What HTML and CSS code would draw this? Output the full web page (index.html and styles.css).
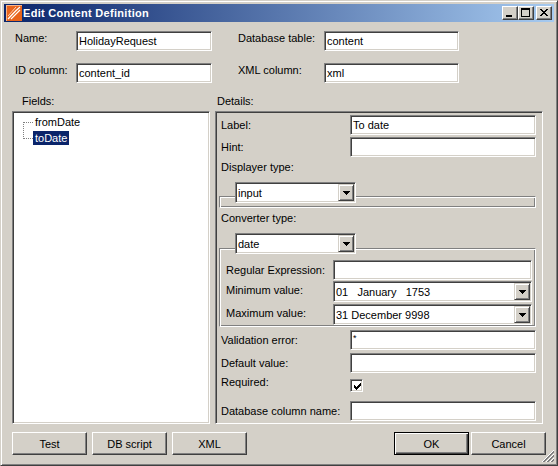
FILE: index.html
```html
<!DOCTYPE html>
<html>
	<head>
		<meta charset="UTF-8">
		<title>Edit Content Definition</title>
		<link rel="stylesheet" href="styles.css">
	</head>
	<body>
		<div class="window">
			<!-- Title bar -->
			<div class="titlebar">
				<svg class="app-icon" width="16" height="16" viewBox="0 0 16 16">
					<rect x="0" y="0" width="16" height="16" fill="#e8641c"/>
					<path d="M0 0.5H16M0.5 0V16" stroke="#f8b58a" stroke-width="1"/>
					<path d="M2 14 C6 10 9 6 14 2" stroke="#ffffff" stroke-width="1.3" fill="none"/>
					<path d="M5 14 C8 11 11 8 14 5" stroke="#ffffff" stroke-width="1.1" fill="none"/>
					<path d="M2 11 C5 8 7 5 10 2" stroke="#fcd2b4" stroke-width="1" fill="none"/>
				</svg>
				<span class="title">Edit Content Definition</span>
				<div class="caption-buttons">
					<div class="cap-btn">
						<svg width="14" height="12"><rect x="3" y="8" width="6" height="2"/></svg>
					</div>
					<div class="cap-btn">
						<svg width="14" height="12"><path d="M2 1h9v2h-9z M2 3h1v7h-1z M10 3h1v7h-1z M2 9h9v1h-9z"/></svg>
					</div>
					<div class="cap-btn close">
						<svg width="14" height="12"><path transform="translate(3,2)" d="M0 0h2v1h-2z M6 0h2v1h-2z M1 1h2v1h-2z M5 1h2v1h-2z M2 2h4v1h-4z M3 3h2v1h-2z M2 4h4v1h-4z M1 5h2v1h-2z M5 5h2v1h-2z M0 6h2v1h-2z M6 6h2v1h-2z"/></svg>
					</div>
				</div>
			</div>

			<!-- Content info -->
			<div class="header-form">
				<div class="hlabel">Name:</div>
				<div class="field">HolidayRequest</div>
				<div class="hlabel spaced">Database table:</div>
				<div class="field">content</div>
				<div class="hlabel">ID column:</div>
				<div class="field">content_id</div>
				<div class="hlabel spaced">XML column:</div>
				<div class="field">xml</div>
			</div>

			<div class="split">
				<div class="fields-col">
					<div class="col-label">Fields:</div>
					<div class="tree">
						<div class="node first"><span>fromDate</span></div>
						<div class="node last selected"><span>toDate</span></div>
					</div>
				</div>
				<div class="details-col">
					<div class="col-label">Details:</div>
					<div class="details">
						<div class="row">
							<div class="dlabel">Label:</div>
							<div class="field wide">To date</div>
						</div>
						<div class="row">
							<div class="dlabel">Hint:</div>
							<div class="field wide"></div>
						</div>
						<div class="row caption">Displayer type:</div>
						<div class="combo picker">
							<span class="combo-text">input</span>
							<span class="combo-btn"><svg width="7" height="4"><path d="M0 0h7v1h-7z M1 1h5v1h-5z M2 2h3v1h-3z M3 3h1v1h-1z"/></svg></span>
						</div>
						<div class="group empty"></div>
						<div class="row caption after-group">Converter type:</div>
						<div class="combo picker">
							<span class="combo-text">date</span>
							<span class="combo-btn"><svg width="7" height="4"><path d="M0 0h7v1h-7z M1 1h5v1h-5z M2 2h3v1h-3z M3 3h1v1h-1z"/></svg></span>
						</div>
						<div class="group converter">
							<div class="grow">
								<div class="glabel">Regular Expression:</div>
								<div class="field gfield"></div>
							</div>
							<div class="grow tall">
								<div class="glabel up">Minimum value:</div>
								<div class="combo gfield">
									<span class="combo-text">01   January   1753</span>
									<span class="combo-btn"><svg width="7" height="4"><path d="M0 0h7v1h-7z M1 1h5v1h-5z M2 2h3v1h-3z M3 3h1v1h-1z"/></svg></span>
								</div>
							</div>
							<div class="grow tall second">
								<div class="glabel up">Maximum value:</div>
								<div class="combo gfield">
									<span class="combo-text">31 December 9998</span>
									<span class="combo-btn"><svg width="7" height="4"><path d="M0 0h7v1h-7z M1 1h5v1h-5z M2 2h3v1h-3z M3 3h1v1h-1z"/></svg></span>
								</div>
							</div>
						</div>
						<div class="row loose">
							<div class="dlabel">Validation error:</div>
							<div class="field wide star"><span>*</span></div>
						</div>
						<div class="row loose">
							<div class="dlabel">Default value:</div>
							<div class="field wide"></div>
						</div>
						<div class="row loose required">
							<div class="dlabel">Required:</div>
							<div class="checkbox">
								<svg width="7" height="7"><path d="M6 0h1v1h-1z M5 1h2v1h-2z M0 2h1v1h-1z M4 2h3v1h-3z M0 3h2v1h-2z M3 3h3v1h-3z M0 4h5v1h-5z M1 5h3v1h-3z M2 6h1v1h-1z"/></svg>
							</div>
						</div>
						<div class="row last-row">
							<div class="dlabel">Database column name:</div>
							<div class="field wide"></div>
						</div>
					</div>
				</div>
			</div>

			<!-- Buttons -->
			<div class="actions">
				<div class="btn-group">
					<div class="btn">Test</div>
					<div class="btn">DB script</div>
					<div class="btn">XML</div>
				</div>
				<div class="btn-group right">
					<div class="btn default">OK</div>
					<div class="btn">Cancel</div>
				</div>
			</div>

			<svg class="grip" width="12" height="12" viewBox="0 0 12 12">
				<g stroke-width="1" shape-rendering="crispEdges">
					<path d="M0 12 L12 0" stroke="#ffffff"/>
					<path d="M1 12 L12 1 M2 12 L12 2" stroke="#808080"/>
					<path d="M4 12 L12 4" stroke="#ffffff"/>
					<path d="M5 12 L12 5 M6 12 L12 6" stroke="#808080"/>
					<path d="M8 12 L12 8" stroke="#ffffff"/>
					<path d="M9 12 L12 9 M10 12 L12 10" stroke="#808080"/>
				</g>
			</svg>
		</div>
	</body>
</html>
```

FILE: styles.css
```css
body {
	margin: 0;
	font-family: "Liberation Sans", Arial, sans-serif;
	font-size: 11px;
	color: #000000;
	background-color: #d4d0c8;
} .window {
	position: relative;
	width: 558px;
	height: 466px;
	box-sizing: border-box;
	padding: 3px;
	border: 1px solid;
	border-color: #d4d0c8 #404040 #404040 #d4d0c8;
	box-shadow: inset 1px 1px #ffffff, inset -1px -1px #808080;
	background-color: #d4d0c8;
}

/* title bar */
.titlebar {
	display: flex;
	align-items: center;
	height: 18px;
	padding: 0 2px;
	background: linear-gradient(to right, #0a246a, #a6caf0);
} .app-icon {
	display: block;
} .title {
	margin-left: 1px;
	color: #ffffff;
	font-weight: bold;
	letter-spacing: 0.3px;
	white-space: nowrap;
} .caption-buttons {
	display: flex;
	margin-left: auto;
} .cap-btn {
	width: 16px;
	height: 14px;
	box-sizing: border-box;
	border: 1px solid;
	border-color: #ffffff #404040 #404040 #ffffff;
	box-shadow: inset -1px -1px #808080;
	background-color: #d4d0c8;
} .cap-btn svg {
	display: block;
} .cap-btn.close {
	margin-left: 2px;
}

/* edit boxes */
.field {
	display: flex;
	align-items: center;
	height: 20px;
	box-sizing: border-box;
	padding: 0 2px;
	border: 1px solid;
	border-color: #808080 #ffffff #ffffff #808080;
	box-shadow: inset 1px 1px #404040, inset -1px -1px #d4d0c8;
	background-color: #ffffff;
	white-space: pre;
	overflow: hidden;
} .field.star {
	align-items: flex-start;
	font-size: 9px;
	padding-top: 2px;
}

.header-form {
	display: grid;
	grid-template-columns: 61px 136px 112px 135px;
	grid-auto-rows: 20px;
	row-gap: 12px;
	padding: 9px 0 0 11px;
} .hlabel {
	line-height: 13px;
	padding-top: 1px;
} .hlabel.spaced {
	padding-left: 26px;
}

.split {
	display: flex;
	gap: 5px;
	margin-top: 12px;
	padding-left: 8px;
} .fields-col, .details-col {
	display: flex;
	flex-direction: column;
} .fields-col {
	width: 198px;
} .details-col {
	width: 328px;
} .col-label {
	height: 13px;
	line-height: 13px;
	margin-bottom: 3px;
} .fields-col .col-label {
	padding-left: 10px;
} .details-col .col-label {
	padding-left: 2px;
}

/* tree */
.tree {
	flex: 1;
	box-sizing: border-box;
	padding: 2px 0 0 1px;
	border: 1px solid;
	border-color: #808080 #ffffff #ffffff #808080;
	box-shadow: inset 1px 1px #404040, inset -1px -1px #d4d0c8;
	background-color: #ffffff;
} .node {
	position: relative;
	display: flex;
	align-items: center;
	height: 16px;
	padding-left: 19px;
} .node span {
	padding: 0 2px;
	line-height: 14px;
} .node.selected span {
	background-color: #0a246a;
	color: #ffffff;
} .node::before {
	content: "";
	position: absolute;
	left: 9px;
	width: 9px;
	height: 8px;
	border-left: 1px dotted #808080;
} .node.first::before {
	top: 8px;
	border-top: 1px dotted #808080;
} .node.last::before {
	top: 0;
	border-bottom: 1px dotted #808080;
}

/* details */
.details {
	display: flex;
	flex-direction: column;
	box-sizing: border-box;
	padding: 1px 6px 2px 3px;
	border: 1px solid;
	border-color: #808080 #ffffff #ffffff #808080;
	box-shadow: inset 1px 1px #404040, inset -1px -1px #d4d0c8;
} .row {
	display: flex;
	align-items: center;
	height: 20px;
	margin-top: 2px;
	padding-left: 2px;
} .row.caption {
	height: 16px;
} .row.after-group {
	height: 17px;
	margin-top: 1px;
} .row.loose {
	margin-top: 3px;
} .row.last-row {
	margin-top: 5px;
} .row.required {
	align-items: flex-start;
} .row.required .dlabel {
	line-height: 13px;
} .dlabel {
	width: 129px;
	flex-shrink: 0;
	white-space: nowrap;
} .field.wide {
	width: 186px;
}

.checkbox {
	width: 13px;
	height: 13px;
	box-sizing: border-box;
	margin-top: 3px;
	padding: 2px 0 0 2px;
	border: 1px solid;
	border-color: #808080 #ffffff #ffffff #808080;
	box-shadow: inset 1px 1px #404040, inset -1px -1px #d4d0c8;
	background-color: #ffffff;
} .checkbox svg {
	display: block;
	margin: 1px 0 0 1px;
}

/* combo boxes */
.combo {
	position: relative;
	display: flex;
	height: 21px;
	box-sizing: border-box;
	padding: 1px;
	border: 1px solid;
	border-color: #808080 #ffffff #ffffff #808080;
	box-shadow: inset 1px 1px #404040, inset -1px -1px #d4d0c8;
	background-color: #ffffff;
} .combo.picker {
	align-self: flex-start;
	width: 121px;
	margin: 7px 0 0 16px;
} .combo-text {
	flex: 1;
	display: flex;
	align-items: center;
	padding-left: 1px;
	white-space: pre;
} .combo-btn {
	display: flex;
	align-items: center;
	justify-content: center;
	width: 16px;
	box-sizing: border-box;
	border: 1px solid;
	border-color: #d4d0c8 #404040 #404040 #d4d0c8;
	box-shadow: inset 1px 1px #ffffff, inset -1px -1px #808080;
	background-color: #d4d0c8;
} .combo-btn svg {
	display: block;
}

/* group frames under the combos */
.group {
	box-sizing: border-box;
	border: 1px solid;
	border-color: #808080 #ffffff #ffffff #808080;
	box-shadow: inset 1px 1px #ffffff, inset -1px -1px #808080;
} .group.empty {
	height: 12px;
	margin-top: -7px;
} .group.converter {
	height: 79px;
	margin-top: -6px;
	padding: 11px 3px 1px 6px;
} .grow {
	display: flex;
	align-items: center;
	height: 20px;
} .grow.tall {
	height: 21px;
	margin-top: 1px;
} .grow.second {
	margin-top: 2px;
} .glabel {
	width: 107px;
	flex-shrink: 0;
	white-space: nowrap;
} .glabel.up {
	padding-bottom: 3px;
} .gfield {
	width: 199px;
}

/* bottom buttons */
.actions {
	display: flex;
	justify-content: space-between;
	margin-top: 8px;
	padding: 0 8px;
} .btn-group {
	display: flex;
	gap: 5px;
} .btn-group.right {
	gap: 2px;
} .btn {
	display: flex;
	align-items: center;
	justify-content: center;
	width: 75px;
	height: 23px;
	box-sizing: border-box;
	border: 1px solid;
	border-color: #ffffff #404040 #404040 #ffffff;
	box-shadow: inset -1px -1px #808080;
} .btn.default {
	border-color: #000000;
	box-shadow: inset 1px 1px #ffffff, inset -1px -1px #404040, inset -2px -2px #808080;
}

.grip {
	position: absolute;
	right: 3px;
	bottom: 3px;
	display: block;
}
```
